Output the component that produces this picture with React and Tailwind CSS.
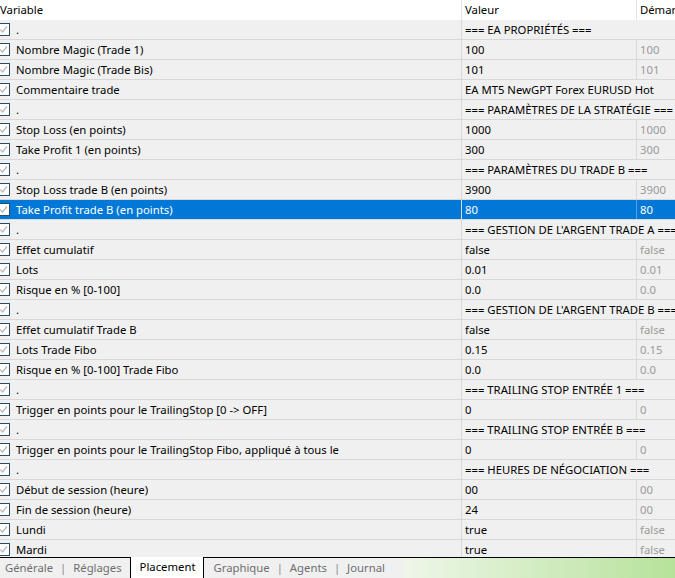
import React from "react";

const rows = [
  { group: "=== EA PROPRIÉTÉS ===" },
  { name: "Nombre Magic (Trade 1)", value: "100", def: "100" },
  { name: "Nombre Magic (Trade Bis)", value: "101", def: "101" },
  { name: "Commentaire trade", value: "EA MT5 NewGPT Forex EURUSD Hot", def: "", wide: true },
  { group: "=== PARAMÈTRES DE LA STRATÉGIE ===" },
  { name: "Stop Loss (en points)", value: "1000", def: "1000" },
  { name: "Take Profit 1 (en points)", value: "300", def: "300" },
  { group: "=== PARAMÈTRES DU TRADE B ===" },
  { name: "Stop Loss trade B (en points)", value: "3900", def: "3900" },
  { name: "Take Profit trade B (en points)", value: "80", def: "80", selected: true },
  { group: "=== GESTION DE L'ARGENT TRADE A ===" },
  { name: "Effet cumulatif", value: "false", def: "false" },
  { name: "Lots", value: "0.01", def: "0.01" },
  { name: "Risque en % [0-100]", value: "0.0", def: "0.0" },
  { group: "=== GESTION DE L'ARGENT TRADE B ===" },
  { name: "Effet cumulatif Trade B", value: "false", def: "false" },
  { name: "Lots Trade Fibo", value: "0.15", def: "0.15" },
  { name: "Risque en % [0-100] Trade Fibo", value: "0.0", def: "0.0" },
  { group: "=== TRAILING STOP ENTRÉE 1 ===" },
  { name: "Trigger en points pour le TrailingStop [0 -> OFF]", value: "0", def: "0" },
  { group: "=== TRAILING STOP ENTRÉE B ===" },
  { name: "Trigger en points pour le TrailingStop Fibo, appliqué à tous le", value: "0", def: "0" },
  { group: "=== HEURES DE NÉGOCIATION ===" },
  { name: "Début de session (heure)", value: "00", def: "00" },
  { name: "Fin de session (heure)", value: "24", def: "00" },
  { name: "Lundi", value: "true", def: "false" },
  { name: "Mardi", value: "true", def: "false" },
];

const Check = () => (
  <span className="-ml-[3px] mr-[6px] flex h-[13px] w-[13px] shrink-0 items-center justify-center border border-[#2b4a63] bg-white">
    <svg width="9" height="9" viewBox="0 0 9 9" fill="none">
      <path d="M1 4.5 L3.5 7 L8 1.5" stroke="#b8b8b8" strokeWidth="1.2" />
    </svg>
  </span>
);

const Row = ({ r }) => {
  const sel = r.selected;
  const base = sel ? "bg-[#0078d7] text-white" : "bg-[#f0f0f0] text-black";
  return (
    <div className={`grid h-[20px] grid-cols-[462px_175px_1fr] border-b border-[#d8d8d8] ${base}`}>
      <div className="flex items-center overflow-hidden whitespace-nowrap border-r border-[#d8d8d8]">
        <Check />
        <span className="pt-px">{r.group ? "." : r.name}</span>
      </div>
      {r.group || r.wide ? (
        <div className="col-span-2 flex items-center overflow-hidden whitespace-nowrap pl-[3px] pt-px">
          {r.group || r.value}
        </div>
      ) : (
        <>
          <div className={`flex items-center whitespace-nowrap border-r pl-[3px] pt-px ${sel ? "border-[#5aa0e0]" : "border-[#d8d8d8]"}`}>
            {r.value}
          </div>
          <div className={`flex items-center whitespace-nowrap pl-[3px] pt-px ${sel ? "text-white" : "text-[#9a9a9a]"}`}>
            {r.def}
          </div>
        </>
      )}
    </div>
  );
};

const Tab = ({ label, sep }) => (
  <div className="flex items-center text-[#6e6e6e]">
    <span>{label}</span>
    {sep && <span className="px-[7px] text-[#8a8a8a]">|</span>}
  </div>
);

export default function App() {
  return (
    <div
      className="flex h-[578px] w-[675px] flex-col overflow-hidden bg-[#f0f0f0] text-[11.3px]"
      style={{ fontFamily: '"Segoe UI", "Noto Sans", sans-serif' }}
    >
      <div className="h-[557px] overflow-hidden">
        <div className="grid h-[20px] grid-cols-[462px_175px_1fr] bg-white">
          <div className="flex items-center border-r border-[#e5e5e5]">Variable</div>
          <div className="flex items-center border-r border-[#e5e5e5] pl-[3px]">Valeur</div>
          <div className="flex items-center overflow-hidden whitespace-nowrap pl-[3px]">Démarrer</div>
        </div>
        {rows.map((r, i) => (
          <Row key={i} r={r} />
        ))}
      </div>
      <div className="flex h-[21px] border-t border-black">
        <div className="flex w-[404px] items-start bg-[#f0f0f0] pl-[5px]">
          <div className="flex h-full items-center">
            <Tab label="Générale" sep />
            <Tab label="Réglages" />
          </div>
          <div className="-mt-px ml-[8px] flex h-[22px] items-center border-x border-b border-black bg-white pl-[9px] pr-[8px] text-black">
            Placement
          </div>
          <div className="ml-[9px] flex h-full items-center">
            <Tab label="Graphique" sep />
            <Tab label="Agents" sep />
            <Tab label="Journal" />
          </div>
        </div>
        <div className="flex-1 bg-gradient-to-r from-[#eef6e8] to-[#b6e29a]" />
      </div>
    </div>
  );
}
